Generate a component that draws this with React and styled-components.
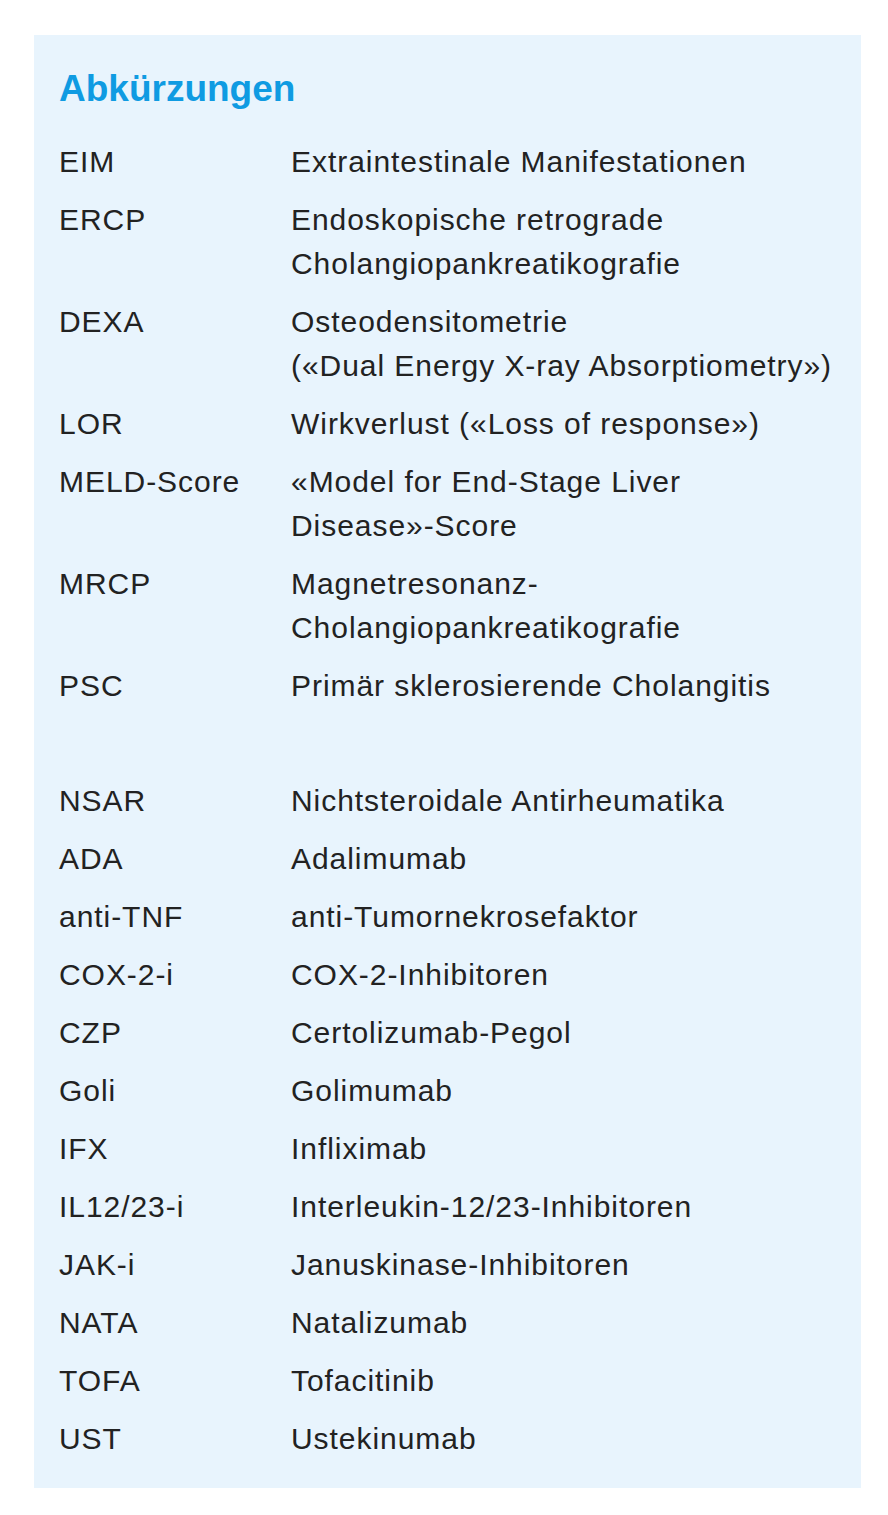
import React from "react";
import styled, { createGlobalStyle } from "styled-components";

const GlobalStyle = createGlobalStyle`
  body {
    margin: 0;
    background: #ffffff;
    font-family: "Liberation Sans", Arial, sans-serif;
  }
`;

// Abkürzungen, gruppiert (zwischen den Gruppen eine Leerzeile)
const groups = [
  [
    ["EIM", ["Extraintestinale Manifestationen"]],
    ["ERCP", ["Endoskopische retrograde", "Cholangiopankreatikografie"]],
    ["DEXA", ["Osteodensitometrie", "(«Dual Energy X-ray Absorptiometry»)"]],
    ["LOR", ["Wirkverlust («Loss of response»)"]],
    ["MELD-Score", ["«Model for End-Stage Liver", "Disease»-Score"]],
    ["MRCP", ["Magnetresonanz-", "Cholangiopankreatikografie"]],
    ["PSC", ["Primär sklerosierende Cholangitis"]],
  ],
  [
    ["NSAR", ["Nichtsteroidale Antirheumatika"]],
    ["ADA", ["Adalimumab"]],
    ["anti-TNF", ["anti-Tumornekrosefaktor"]],
    ["COX-2-i", ["COX-2-Inhibitoren"]],
    ["CZP", ["Certolizumab-Pegol"]],
    ["Goli", ["Golimumab"]],
    ["IFX", ["Infliximab"]],
    ["IL12/23-i", ["Interleukin-12/23-Inhibitoren"]],
    ["JAK-i", ["Januskinase-Inhibitoren"]],
    ["NATA", ["Natalizumab"]],
    ["TOFA", ["Tofacitinib"]],
    ["UST", ["Ustekinumab"]],
  ],
];

const App = () => {
  return (
    <>
      <GlobalStyle />
      <Page>
        <Box>
          <Title>Abkürzungen</Title>
          {groups.map((group, gi) => (
            <List key={gi} spaced={gi > 0}>
              {group.map(([abbr, lines]) => (
                <React.Fragment key={abbr}>
                  <Term>{abbr}</Term>
                  <Definition>
                    {lines.map((line) => (
                      <Line key={line}>{line}</Line>
                    ))}
                  </Definition>
                </React.Fragment>
              ))}
            </List>
          ))}
        </Box>
      </Page>
    </>
  );
};

const Page = styled.div`
  padding: 35px 27px 28px 34px;
`;

const Box = styled.div`
  background: #e8f4fd;
  padding: 32px 25px 27px 25px;
  color: #222222;
`;

const Title = styled.h2`
  margin: 0 0 29px;
  font-size: 37px;
  line-height: 44px;
  font-weight: 700;
  color: #0f9be2;
`;

const List = styled.div`
  display: grid;
  grid-template-columns: 232px 1fr;
  row-gap: 14px;
  margin-top: ${(p) => (p.spaced ? "71px" : "0")};
  font-size: 30px;
  line-height: 44px;
  letter-spacing: 0.95px;
`;

const Term = styled.div`
  white-space: nowrap;
`;

const Definition = styled.div``;

const Line = styled.div`
  white-space: nowrap;
`;

export default App;
